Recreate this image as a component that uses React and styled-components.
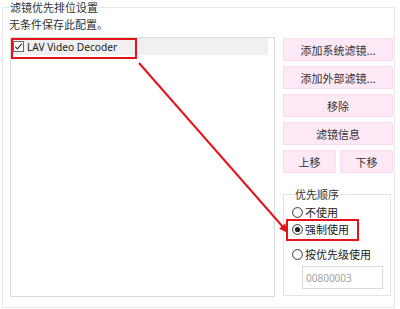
import React from "react";
import styled, { createGlobalStyle } from "styled-components";

const Global = createGlobalStyle`
  html, body { margin: 0; padding: 0; background: #ffffff; }
  body {
    font-family: "Noto Sans", "Noto Sans CJK SC", sans-serif;
    font-size: 11px;
    color: #2b2b2b;
  }
  * { box-sizing: border-box; }
`;

const Page = styled.div`
  position: relative;
  width: 400px;
  height: 309px;
  padding-left: 2px;
`;

const OuterGroup = styled.fieldset`
  margin: 0;
  width: 393px;
  height: 308px;
  border: 1px solid #e8e8e8;
  padding: 3px 1px 9px 7px;
  min-width: 0;
`;

const Legend = styled.legend`
  padding: 0 ${(p) => p.$pad || 0}px;
  margin-left: ${(p) => p.$offset || 0}px;
  font-family: "Noto Sans CJK SC", sans-serif;
  font-size: 11px;
  line-height: 14px;
  color: #333;
`;

const Subtitle = styled.div`
  margin-left: -1px;
  font-family: "Noto Sans CJK SC", sans-serif;
  line-height: 14px;
  color: #333;
`;

const MainRow = styled.div`
  display: flex;
  gap: 8px;
  margin-top: 6px;
`;

const ListBox = styled.div`
  position: relative;
  width: 265px;
  height: 260px;
  border: 1px solid #dadada;
  padding: 0 1px;
`;

const ListRow = styled.div`
  display: flex;
  align-items: center;
  gap: 3px;
  height: 17px;
  margin-right: 5px;
  padding-left: 1px;
  background: #f0f0f0;
  font-family: "Noto Sans", sans-serif;
  font-size: 10.2px;
  color: #222;
`;

const Annotation = styled.div`
  position: absolute;
  left: ${(p) => p.$x}px;
  top: ${(p) => p.$y}px;
  width: ${(p) => p.$w}px;
  height: ${(p) => p.$h}px;
  border: 2px solid #e5131b;
  pointer-events: none;
`;

const Column = styled.div`
  display: flex;
  flex-direction: column;
  gap: 5px;
  width: 110px;
  padding-top: 1px;
`;

const Button = styled.button`
  flex: 1;
  height: 23px;
  margin: 0;
  padding: 0;
  background: #fde9f5;
  border: 1px solid #fadcee;
  font-family: "Noto Sans CJK SC", sans-serif;
  font-size: 11px;
  color: #333;
`;

const ButtonPair = styled.div`
  display: flex;
  gap: 4px;
`;

const PriorityGroup = styled.fieldset`
  margin: 9px 0 0 0;
  width: 108px;
  height: 109px;
  border: 1px solid #e3e3e3;
  padding: 0 0 6px 8px;
  min-width: 0;
  display: flex;
  flex-direction: column;
`;

const RadioRow = styled.div`
  position: relative;
  display: flex;
  align-items: center;
  gap: 2px;
  height: 16px;
  margin-top: ${(p) => p.$top}px;
  font-family: "Noto Sans CJK SC", sans-serif;
  font-size: 11px;
  color: #222;
`;

const ValueBox = styled.div`
  margin: 4px 0 0 10px;
  width: 81px;
  height: 23px;
  border: 1px solid #dadada;
  padding-left: 3px;
  display: flex;
  align-items: center;
  font-family: "Noto Sans", sans-serif;
  font-size: 10px;
  color: #a3a3a3;
`;

const Overlay = styled.svg`
  position: absolute;
  left: 0;
  top: 0;
  pointer-events: none;
`;

const CheckBox = () => (
  <svg width="11" height="11" viewBox="0 0 11 11">
    <rect x="0.5" y="0.5" width="10" height="10" fill="#fff" stroke="#6a6a6a" />
    <path d="M2.2 5.6 L4.4 7.9 L8.8 2.6" fill="none" stroke="#333" strokeWidth="1.1" />
  </svg>
);

const Radio = ({ on }) => (
  <svg width="11" height="11" viewBox="0 0 11 11">
    <circle cx="5.5" cy="5.5" r="4.9" fill="#fff" stroke="#333" strokeWidth="1" />
    {on && <circle cx="5.5" cy="5.5" r="2.6" fill="#222" />}
  </svg>
);

export default function App() {
  return (
    <>
      <Global />
      <Page>
        <OuterGroup>
          <Legend>滤镜优先排位设置</Legend>
          <Subtitle>无条件保存此配置。</Subtitle>
          <MainRow>
            <ListBox>
              <ListRow>
                <CheckBox />
                <span>LAV Video Decoder</span>
              </ListRow>
              <Annotation $x={0} $y={0} $w={126} $h={21} />
            </ListBox>
            <Column>
              <ButtonPair><Button>添加系统滤镜...</Button></ButtonPair>
              <ButtonPair><Button>添加外部滤镜...</Button></ButtonPair>
              <ButtonPair><Button>移除</Button></ButtonPair>
              <ButtonPair><Button>滤镜信息</Button></ButtonPair>
              <ButtonPair>
                <Button>上移</Button>
                <Button>下移</Button>
              </ButtonPair>
              <PriorityGroup>
                <Legend $offset={2} $pad={1}>优先顺序</Legend>
                <RadioRow $top={3}>
                  <Radio />
                  <span>不使用</span>
                </RadioRow>
                <RadioRow $top={1}>
                  <Radio on />
                  <span>强制使用</span>
                  <Annotation $x={-6} $y={-2} $w={73} $h={22} />
                </RadioRow>
                <RadioRow $top={9}>
                  <Radio />
                  <span>按优先级使用</span>
                </RadioRow>
                <ValueBox>00800003</ValueBox>
              </PriorityGroup>
            </Column>
          </MainRow>
        </OuterGroup>
        <Overlay width="400" height="309" viewBox="0 0 400 309">
          <line x1="139" y1="63" x2="283" y2="227" stroke="#e5131b" strokeWidth="2" />
          <polygon points="288,233 285.1,223.6 279.1,228.8" fill="#e5131b" />
        </Overlay>
      </Page>
    </>
  );
}
